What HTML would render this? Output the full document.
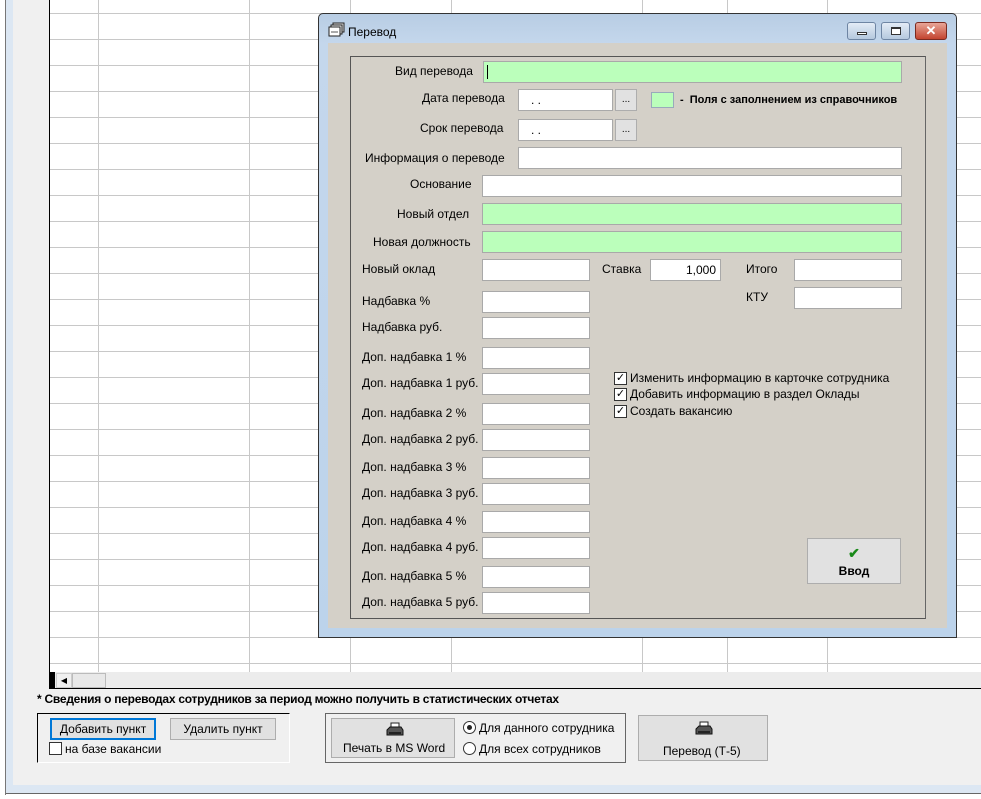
<!DOCTYPE html>
<html><head><meta charset="utf-8"><style>
*{margin:0;padding:0;box-sizing:border-box}
body{width:981px;height:799px;position:relative;overflow:hidden;background:#fff;font-family:"Liberation Sans",Arial,sans-serif;font-size:12px;color:#000}
.a{position:absolute}
.f{position:absolute;background:#fff;border:1px solid #a9a9a9;height:22px}
.g{background:#bbffbb}
.l{position:absolute;font-size:12px;white-space:nowrap}
.btn{position:absolute;background:#e1e1e1;border:1px solid #adadad;text-align:center}
.cb{position:absolute;width:13px;height:13px;border:1px solid #333;background:#fff}
</style></head><body>
<div class="a" style="left:0;top:0;width:6px;height:795px;background:#fff;border-right:1px solid #777"></div>
<div class="a" style="left:6px;top:0;width:7px;height:793px;background:#dce7f3"></div>
<div class="a" style="left:13px;top:0;width:968px;height:785px;background:#f0f0f0"></div>
<div class="a" style="left:6px;top:785px;width:975px;height:8px;background:#dce7f3"></div>
<div class="a" style="left:6px;top:793px;width:975px;height:1px;background:#666"></div>
<svg class="a" style="left:49px;top:0" width="932" height="673">
<rect x="0" y="0" width="932" height="673" fill="#fff"/>
<g stroke="#c8c8c8" stroke-width="1">
<line x1="49.5" y1="0" x2="49.5" y2="673"/><line x1="200.5" y1="0" x2="200.5" y2="673"/>
<line x1="301.5" y1="0" x2="301.5" y2="673"/><line x1="402.5" y1="0" x2="402.5" y2="673"/>
<line x1="593.5" y1="0" x2="593.5" y2="673"/><line x1="678.5" y1="0" x2="678.5" y2="673"/><line x1="778.5" y1="0" x2="778.5" y2="673"/>
<line x1="0" y1="13.5" x2="932" y2="13.5"/><line x1="0" y1="39.5" x2="932" y2="39.5"/><line x1="0" y1="65.5" x2="932" y2="65.5"/><line x1="0" y1="91.5" x2="932" y2="91.5"/><line x1="0" y1="117.5" x2="932" y2="117.5"/><line x1="0" y1="143.5" x2="932" y2="143.5"/><line x1="0" y1="169.5" x2="932" y2="169.5"/><line x1="0" y1="195.5" x2="932" y2="195.5"/><line x1="0" y1="221.5" x2="932" y2="221.5"/><line x1="0" y1="247.5" x2="932" y2="247.5"/><line x1="0" y1="273.5" x2="932" y2="273.5"/><line x1="0" y1="299.5" x2="932" y2="299.5"/><line x1="0" y1="325.5" x2="932" y2="325.5"/><line x1="0" y1="351.5" x2="932" y2="351.5"/><line x1="0" y1="377.5" x2="932" y2="377.5"/><line x1="0" y1="403.5" x2="932" y2="403.5"/><line x1="0" y1="429.5" x2="932" y2="429.5"/><line x1="0" y1="455.5" x2="932" y2="455.5"/><line x1="0" y1="481.5" x2="932" y2="481.5"/><line x1="0" y1="507.5" x2="932" y2="507.5"/><line x1="0" y1="533.5" x2="932" y2="533.5"/><line x1="0" y1="559.5" x2="932" y2="559.5"/><line x1="0" y1="585.5" x2="932" y2="585.5"/><line x1="0" y1="611.5" x2="932" y2="611.5"/><line x1="0" y1="637.5" x2="932" y2="637.5"/><line x1="0" y1="663.5" x2="932" y2="663.5"/>
</g>
<line x1="0.5" y1="0" x2="0.5" y2="673" stroke="#000"/>
</svg>
<div class="a" style="left:49px;top:672px;width:932px;height:17px;background:#ececec"></div>
<div class="a" style="left:49px;top:672px;width:6px;height:17px;background:#000"></div>
<div class="a" style="left:56px;top:673px;width:16px;height:15px;background:#f0f0f0;border:1px solid #ccc;font-size:8px;line-height:13px;text-align:center">◀</div>
<div class="a" style="left:72px;top:673px;width:34px;height:15px;background:#e8e8e8;border:1px solid #bbb"></div>
<div class="a" style="left:49px;top:688px;width:932px;height:1px;background:#000"></div>
<div class="l" style="left:37px;top:692px;font-weight:bold;letter-spacing:-0.25px">* Сведения о переводах сотрудников за период можно получить в статистических отчетах</div>
<div class="a" style="left:37px;top:713px;width:253px;height:50px;border-top:1px solid #000;border-left:1px solid #000;border-right:1px solid #fff;border-bottom:1px solid #fff"></div>
<div class="btn" style="left:50px;top:718px;width:106px;height:22px;border:2px solid #0078d7;line-height:18px">Добавить пункт</div>
<div class="btn" style="left:170px;top:718px;width:106px;height:22px;line-height:20px">Удалить пункт</div>
<div class="cb" style="left:49px;top:742px"></div>
<div class="l" style="left:65px;top:742px">на базе вакансии</div>
<div class="a" style="left:325px;top:713px;width:301px;height:50px;border:1px solid #666"></div>
<div class="btn" style="left:331px;top:718px;width:124px;height:40px"></div>
<svg class="a" style="left:386px;top:722px" width="18" height="16"><rect x="5" y="1" width="8" height="5" fill="#fff" stroke="#222"/><path d="M1 8 L4 5 H15 L17 8 V13 H1 Z" fill="#555" stroke="#111"/><rect x="3" y="10" width="12" height="2" fill="#222"/></svg>
<div class="l" style="left:343px;top:741px">Печать в MS Word</div>
<div class="a" style="left:463px;top:721px;width:13px;height:13px;border:1px solid #333;border-radius:50%;background:#fff"><div class="a" style="left:3px;top:3px;width:5px;height:5px;border-radius:50%;background:#222"></div></div>
<div class="l" style="left:479px;top:721px">Для данного сотрудника</div>
<div class="a" style="left:463px;top:742px;width:13px;height:13px;border:1px solid #333;border-radius:50%;background:#fff"></div>
<div class="l" style="left:479px;top:742px">Для всех сотрудников</div>
<div class="btn" style="left:638px;top:715px;width:130px;height:46px"></div>
<svg class="a" style="left:695px;top:721px" width="18" height="16"><rect x="5" y="1" width="8" height="5" fill="#fff" stroke="#222"/><path d="M1 8 L4 5 H15 L17 8 V13 H1 Z" fill="#555" stroke="#111"/><rect x="3" y="10" width="12" height="2" fill="#222"/></svg>
<div class="l" style="left:663px;top:744px">Перевод (Т-5)</div>
<div class="a" style="left:318px;top:13px;width:639px;height:625px;border:1px solid #333;border-radius:5px 5px 0 0;background:linear-gradient(#b8cde4,#c4d7ec 30px,#bcd3eb)"></div>
<svg class="a" style="left:328px;top:22px" width="18" height="16"><rect x="5" y="1" width="11" height="9" fill="#ddd" stroke="#222"/><rect x="3" y="3" width="11" height="9" fill="#eee" stroke="#222"/><rect x="1" y="5" width="11" height="9" fill="#fff" stroke="#222"/><line x1="3" y1="10" x2="10" y2="10" stroke="#555"/></svg>
<div class="l" style="left:348px;top:25px">Перевод</div>
<div class="a" style="left:847px;top:22px;width:29px;height:18px;border:1px solid #6e85a3;border-radius:3px;background:linear-gradient(#e3ecf6,#b5c8de)"><div class="a" style="left:9px;top:9px;width:10px;height:3px;background:#fff;border:1px solid #333"></div></div>
<div class="a" style="left:881px;top:22px;width:29px;height:18px;border:1px solid #6e85a3;border-radius:3px;background:linear-gradient(#e3ecf6,#b5c8de)"><div class="a" style="left:9px;top:4px;width:10px;height:8px;border:1px solid #333;border-top-width:2px;background:#fff"></div></div>
<div class="a" style="left:915px;top:22px;width:32px;height:18px;border:1px solid #7a2a20;border-radius:3px;background:linear-gradient(#e8a597,#c3442f);color:#fff;font-weight:bold;text-align:center;line-height:16px;font-size:13px">✕</div>
<div class="a" style="left:328px;top:43px;width:619px;height:585px;background:#d4d0c8"></div>
<div class="a" style="left:350px;top:56px;width:576px;height:563px;border:1px solid #555;border-right-color:#666"></div>
<div class="l" style="left:395px;top:64px">Вид перевода</div>
<div class="f g" style="left:483px;top:61px;width:419px"><div class="a" style="left:3px;top:3px;width:1px;height:14px;background:#000"></div></div>
<div class="l" style="left:422px;top:91px">Дата перевода</div>
<div class="f" style="left:518px;top:89px;width:95px;padding-left:12px;line-height:20px">. .</div>
<div class="btn" style="left:615px;top:89px;width:22px;height:22px;line-height:20px;font-size:10px">...</div>
<div class="a" style="left:651px;top:92px;width:23px;height:16px;background:#bbffbb;border:1px solid #9ab"></div>
<div class="l" style="left:680px;top:94px;font-weight:bold;font-size:11px">-&nbsp; Поля с заполнением из справочников</div>
<div class="l" style="left:420px;top:121px">Срок перевода</div>
<div class="f" style="left:518px;top:119px;width:95px;padding-left:12px;line-height:20px">. .</div>
<div class="btn" style="left:615px;top:119px;width:22px;height:22px;line-height:20px;font-size:10px">...</div>
<div class="l" style="left:365px;top:151px">Информация о переводе</div>
<div class="f" style="left:518px;top:147px;width:384px"></div>
<div class="l" style="left:410px;top:177px">Основание</div>
<div class="f" style="left:482px;top:175px;width:420px"></div>
<div class="l" style="left:397px;top:207px">Новый отдел</div>
<div class="f g" style="left:482px;top:203px;width:420px"></div>
<div class="l" style="left:373px;top:235px">Новая должность</div>
<div class="f g" style="left:482px;top:231px;width:420px"></div>
<div class="l" style="left:362px;top:262px">Новый оклад</div>
<div class="f" style="left:482px;top:259px;width:108px"></div>
<div class="l" style="left:602px;top:262px">Ставка</div>
<div class="f" style="left:650px;top:259px;width:71px;text-align:right;padding-right:4px;line-height:20px">1,000</div>
<div class="l" style="left:746px;top:262px">Итого</div>
<div class="f" style="left:794px;top:259px;width:108px"></div>
<div class="l" style="left:746px;top:290px">КТУ</div>
<div class="f" style="left:794px;top:287px;width:108px"></div>
<div class="l" style="left:362px;top:294px">Надбавка %</div><div class="f" style="left:482px;top:291px;width:108px"></div>
<div class="l" style="left:362px;top:320px">Надбавка руб.</div><div class="f" style="left:482px;top:317px;width:108px"></div>
<div class="l" style="left:362px;top:350px">Доп. надбавка 1 %</div><div class="f" style="left:482px;top:347px;width:108px"></div>
<div class="l" style="left:362px;top:376px">Доп. надбавка 1 руб.</div><div class="f" style="left:482px;top:373px;width:108px"></div>
<div class="l" style="left:362px;top:406px">Доп. надбавка 2 %</div><div class="f" style="left:482px;top:403px;width:108px"></div>
<div class="l" style="left:362px;top:432px">Доп. надбавка 2 руб.</div><div class="f" style="left:482px;top:429px;width:108px"></div>
<div class="l" style="left:362px;top:460px">Доп. надбавка 3 %</div><div class="f" style="left:482px;top:457px;width:108px"></div>
<div class="l" style="left:362px;top:486px">Доп. надбавка 3 руб.</div><div class="f" style="left:482px;top:483px;width:108px"></div>
<div class="l" style="left:362px;top:514px">Доп. надбавка 4 %</div><div class="f" style="left:482px;top:511px;width:108px"></div>
<div class="l" style="left:362px;top:540px">Доп. надбавка 4 руб.</div><div class="f" style="left:482px;top:537px;width:108px"></div>
<div class="l" style="left:362px;top:569px">Доп. надбавка 5 %</div><div class="f" style="left:482px;top:566px;width:108px"></div>
<div class="l" style="left:362px;top:595px">Доп. надбавка 5 руб.</div><div class="f" style="left:482px;top:592px;width:108px"></div>
<div class="cb" style="left:614px;top:372px;font-size:11px;line-height:11px;text-align:center">✓</div><div class="l" style="left:630px;top:371px">Изменить информацию в карточке сотрудника</div>
<div class="cb" style="left:614px;top:388px;font-size:11px;line-height:11px;text-align:center">✓</div><div class="l" style="left:630px;top:387px">Добавить информацию в раздел Оклады</div>
<div class="cb" style="left:614px;top:405px;font-size:11px;line-height:11px;text-align:center">✓</div><div class="l" style="left:630px;top:404px">Создать вакансию</div>
<div class="btn" style="left:807px;top:538px;width:94px;height:46px;padding-top:6px;font-weight:bold"><span style="color:#1a8a1a;font-size:14px">✔</span><br><span style="line-height:18px">Ввод</span></div>
</body></html>
